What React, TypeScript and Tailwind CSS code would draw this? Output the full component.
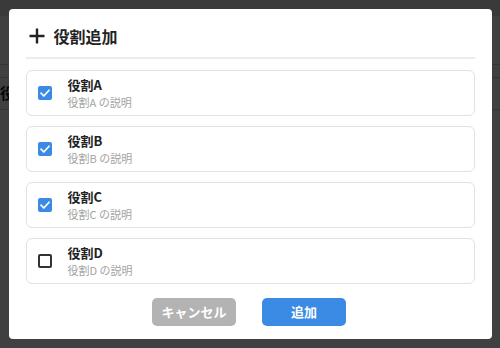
import { useState } from 'react';

const ROLES = [
  { id: 'A', name: '役割A', desc: '役割A の説明', checked: true },
  { id: 'B', name: '役割B', desc: '役割B の説明', checked: true },
  { id: 'C', name: '役割C', desc: '役割C の説明', checked: true },
  { id: 'D', name: '役割D', desc: '役割D の説明', checked: false },
];

function CheckBox({ checked }: { checked: boolean }) {
  if (checked) {
    return (
      <div className="w-[14px] h-[14px] rounded-[2px] bg-[#3b8ae3] flex items-center justify-center flex-shrink-0">
        <svg width="12" height="12" viewBox="0 0 12 12" fill="none">
          <path d="M2 6.2 L4.8 9 L10 3.2" stroke="white" strokeWidth="1.7" strokeLinecap="round" strokeLinejoin="round" />
        </svg>
      </div>
    );
  }
  return <div className="w-[14px] h-[14px] rounded-[2px] border-2 border-[#333333] flex-shrink-0" />;
}

export default function App() {
  const [roles, setRoles] = useState(ROLES);

  const toggle = (id: string) =>
    setRoles(rs => rs.map(r => (r.id === id ? { ...r, checked: !r.checked } : r)));

  return (
    <div
      className="w-[500px] h-[348px] relative overflow-hidden bg-white"
      style={{ fontFamily: '"Noto Sans CJK JP", "Noto Sans", sans-serif' }}
    >
      {/* Page behind the dialog */}
      <div className="flex flex-col">
        <div className="h-[16px] bg-[#e6e6e6]" />
        <div className="h-[49px] border-b border-[#d0d0d0]" />
        <div className="h-[13px] border-b border-[#d0d0d0]" />
        <div className="h-[32px] border-b border-[#d8d8d8] flex items-center text-[15px] font-bold text-[#111]">
          役割一覧
        </div>
      </div>

      {/* Overlay */}
      <div className="absolute inset-0 bg-black/75 flex items-center justify-center">
        <div className="w-[483px] h-[330px] bg-white rounded-[4px] px-[17px] pt-[15px] pb-[12px] flex flex-col">
          {/* Header */}
          <div className="h-[24px] flex items-center gap-[9px] pl-[3px]">
            <svg width="16" height="16" viewBox="0 0 16 16" fill="none">
              <path d="M8 0.5 V15.5 M0.5 8 H15.5" stroke="#222222" strokeWidth="2.4" />
            </svg>
            <span className="text-[16px] font-bold text-[#222222] leading-[24px]">役割追加</span>
          </div>
          <div className="mt-[9px] border-b-2 border-[#ececec]" />

          {/* Role list */}
          <div className="mt-[11px] flex flex-col gap-[10px]">
            {roles.map(r => (
              <button
                key={r.id}
                onClick={() => toggle(r.id)}
                className="h-[46px] w-full border border-[#e2e2e2] rounded-[6px] flex items-center pl-[11px] gap-[16px] text-left"
              >
                <CheckBox checked={r.checked} />
                <div className="flex flex-col">
                  <span className="text-[13px] font-bold text-[#222222] leading-[19px]">{r.name}</span>
                  <span className="text-[11px] text-[#a3a3a3] leading-[17px]">{r.desc}</span>
                </div>
              </button>
            ))}
          </div>

          {/* Actions */}
          <div className="mt-[14px] flex justify-center gap-[26px] pr-[2px]">
            <button className="w-[84px] h-[28px] rounded-[5px] bg-[#b3b3b3] text-white text-[13px] font-bold">
              キャンセル
            </button>
            <button className="w-[84px] h-[28px] rounded-[5px] bg-[#3b8ae3] text-white text-[13px] font-bold">
              追加
            </button>
          </div>
        </div>
      </div>
    </div>
  );
}
